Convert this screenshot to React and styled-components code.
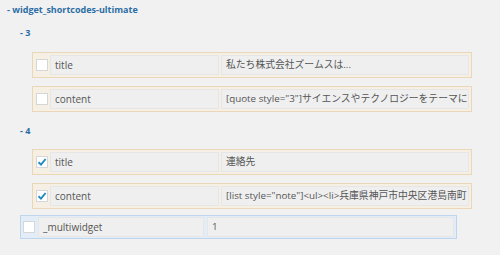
import React from "react";
import styled, { createGlobalStyle } from "styled-components";

const groups = [
  {
    name: "3",
    rows: [
      { key: "title", value: "私たち株式会社ズームスは...", checked: false },
      {
        key: "content",
        value: '[quote style="3"]サイエンスやテクノロジーをテーマに',
        checked: false,
      },
    ],
  },
  {
    name: "4",
    rows: [
      { key: "title", value: "連絡先", checked: true },
      {
        key: "content",
        value: '[list style="note"]<ul><li>兵庫県神戸市中央区港島南町',
        checked: true,
      },
    ],
  },
];

const Check = ({ checked }) => (
  <CheckBox>
    {checked && (
      <svg width="10" height="10" viewBox="0 0 10 10">
        <path d="M1.5 5.2 L4 7.6 L8.6 2" fill="none" stroke="#1e8cbe" strokeWidth="1.9" />
      </svg>
    )}
  </CheckBox>
);

const App = () => {
  return (
    <>
      <GlobalStyle />
      <Page>
        <Heading>- widget_shortcodes-ultimate</Heading>
        {groups.map((g, i) => (
          <Group key={g.name}>
            <SubHeading $after={i === 0 ? 11 : 10}>- {g.name}</SubHeading>
            {g.rows.map((r) => (
              <Row key={r.key}>
                <Check checked={r.checked} />
                <KeyField>{r.key}</KeyField>
                <ValueField>{r.value}</ValueField>
              </Row>
            ))}
          </Group>
        ))}
        <MultiRow>
          <Check checked={false} />
          <KeyField $wide={166}>_multiwidget</KeyField>
          <ValueField $gap={3}>1</ValueField>
        </MultiRow>
      </Page>
    </>
  );
};

export default App;

// ---------------------------- styled-components ----------------------
const GlobalStyle = createGlobalStyle`
  body {
    margin: 0;
    background: #f1f1f1;
    font-family: "Open Sans", "Noto Sans CJK JP", sans-serif;
  }
`;

const Page = styled.div`
  width: 500px;
  height: 255px;
  padding-top: 2px;
  box-sizing: border-box;
  overflow: hidden;
  display: flex;
  flex-direction: column;
`;

const Heading = styled.div`
  padding-left: 7px;
  height: 16px;
  line-height: 16px;
  font-size: 9px;
  font-weight: 700;
  color: #2b6ea5;
`;

const Group = styled.div`
  display: flex;
  flex-direction: column;
  padding-left: 32px;
  margin-top: 7px;

  & + & {
    margin-top: 3px;
  }
`;

const SubHeading = styled.div`
  margin: 0 0 ${(p) => p.$after}px -12px;
  height: 16px;
  line-height: 16px;
  font-size: 9px;
  font-weight: 700;
  color: #2b6ea5;
`;

const Row = styled.div`
  width: 440px;
  height: 26px;
  flex: none;
  box-sizing: border-box;
  margin-bottom: 8px;
  padding: 2px 2px 2px 3px;
  display: flex;
  align-items: center;
  border: 1px solid #ead6b8;
  background: #f6efe3;
`;

const MultiRow = styled(Row)`
  width: 437px;
  height: 24px;
  margin: -2px 0 0 20px;
  padding: 2px;
  border-color: #bdd6ee;
  background: #e3edf8;
`;

const CheckBox = styled.div`
  width: 12px;
  height: 12px;
  flex: none;
  box-sizing: border-box;
  border: 1px solid #d6d6d6;
  background: #fff;
  display: flex;
  align-items: center;
  justify-content: center;
`;

const Field = styled.div`
  height: 20px;
  box-sizing: border-box;
  line-height: 18px;
  padding: 0 4px;
  font-size: 10px;
  color: #555;
  background: #efefef;
  border: 1px solid #e6e6e6;
  white-space: nowrap;
  overflow: hidden;
`;

const KeyField = styled(Field)`
  width: ${(p) => p.$wide || 169}px;
  margin-left: ${(p) => (p.$wide ? 3 : 2)}px;
  flex: none;
`;

const ValueField = styled(Field)`
  flex: 1;
  margin-left: ${(p) => p.$gap || 2}px;
  font-size: 9.8px;
`;
